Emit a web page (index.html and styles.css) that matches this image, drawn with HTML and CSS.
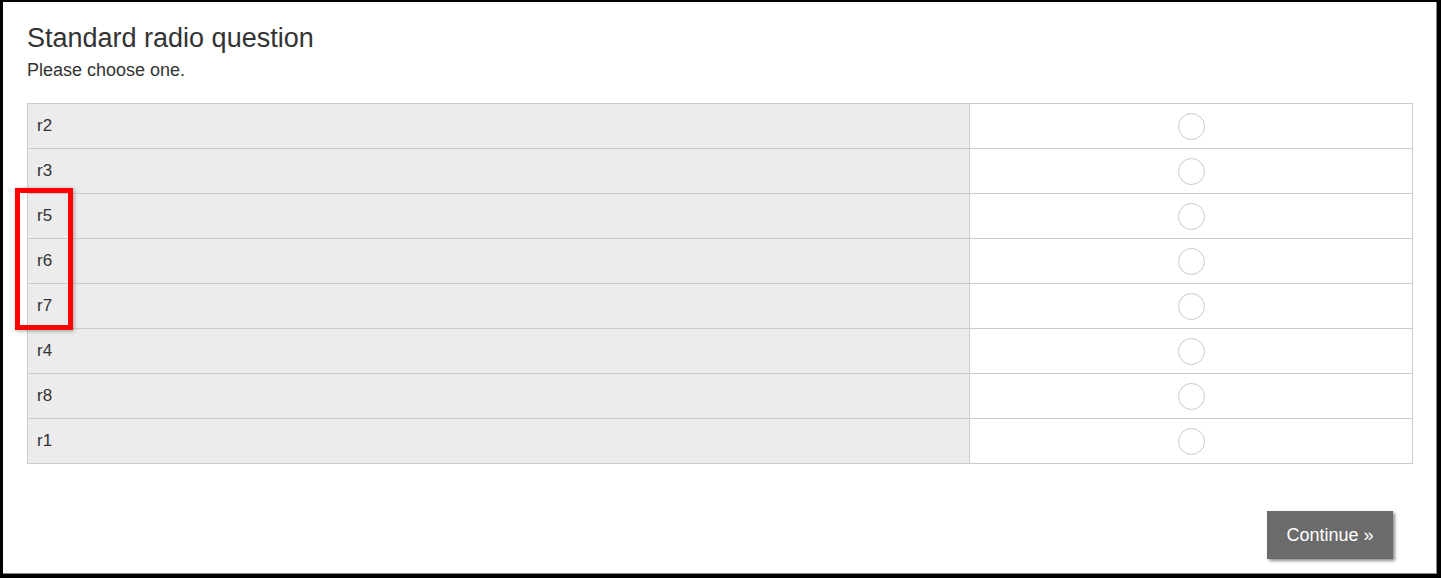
FILE: index.html
```html
<!DOCTYPE html>
<html lang="en">
<head>
    <meta charset="UTF-8">
    <meta name="viewport" content="width=device-width, initial-scale=1.0">
    <title>Standard radio question</title>
    <link rel="stylesheet" href="styles.css">
</head>
<body>
    <div class="frame">
        <h1 class="question">Standard radio question</h1>
        <p class="instruction">Please choose one.</p>

        <table class="grid">
            <tr><td class="label">r2</td><td class="choice"><span class="radio"></span></td></tr>
            <tr><td class="label">r3</td><td class="choice"><span class="radio"></span></td></tr>
            <tr><td class="label">r5</td><td class="choice"><span class="radio"></span></td></tr>
            <tr><td class="label">r6</td><td class="choice"><span class="radio"></span></td></tr>
            <tr><td class="label">r7</td><td class="choice"><span class="radio"></span></td></tr>
            <tr><td class="label">r4</td><td class="choice"><span class="radio"></span></td></tr>
            <tr><td class="label">r8</td><td class="choice"><span class="radio"></span></td></tr>
            <tr><td class="label">r1</td><td class="choice"><span class="radio"></span></td></tr>
        </table>

        <div class="actions">
            <button class="btn">Continue &raquo;</button>
        </div>

        <div class="highlight"></div>
    </div>
</body>
</html>
```

FILE: styles.css
```css
body {
    margin: 0;
    padding: 0;
    font-family: "Liberation Sans", Arial, sans-serif;
    color: #333;
    background: white;
}
.frame {
    position: relative;
    box-sizing: border-box;
    height: 578px;
    padding: 21px 24px 0 24px;
    border-style: solid;
    border-color: black;
    border-width: 2px 4px 4px 3px;
    box-shadow: inset -1px -1px 0 #8a8a8a;
}
.question {
    margin: 0;
    font-size: 27px;
    font-weight: normal;
    line-height: 31px;
}
.instruction {
    margin: 6px 0 0 0;
    font-size: 18px;
    line-height: 21px;
}
.grid {
    width: 100%;
    margin-top: 22px;
    border-collapse: collapse;
}
.grid td {
    height: 44px;
    padding: 0;
    border: 1px solid #cbcbcb;
}
.label {
    width: 932px;
    padding: 0 0 0 9px !important;
    background: #ececec;
    font-size: 17px;
}
.choice {
    text-align: center;
}
.radio {
    display: inline-block;
    box-sizing: border-box;
    width: 27px;
    height: 27px;
    margin-top: 1px;
    vertical-align: middle;
    border: 1px solid #c8c8c8;
    border-radius: 50%;
}
.actions {
    display: flex;
    justify-content: flex-end;
    margin-top: 47px;
    padding-right: 20px;
}
.btn {
    width: 126px;
    height: 48px;
    padding: 0;
    border: none;
    background: #6b6b6b;
    color: white;
    font-family: "Liberation Sans", Arial, sans-serif;
    font-size: 18px;
    box-shadow: 2px 2px 3px rgba(0, 0, 0, 0.45);
    cursor: pointer;
}
.highlight {
    position: absolute;
    left: 12px;
    top: 186px;
    box-sizing: border-box;
    width: 58px;
    height: 142px;
    border: 5px solid #ff0000;
    box-shadow: 1px 1px 4px rgba(0, 0, 0, 0.35);
}
```
